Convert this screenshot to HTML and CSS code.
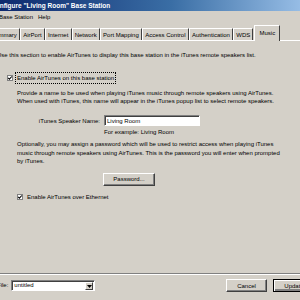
FILE: index.html
```html
<!DOCTYPE html>
<html lang="en">
<head>
    <meta charset="UTF-8">
    <title>Configure "Living Room" Base Station</title>
    <link rel="stylesheet" href="styles.css">
</head>
<body>
<div class="window">
    <div class="titlebar"><span class="title">Configure "Living Room" Base Station</span></div>
    <div class="menubar">
        <span class="menu-item">Base Station</span>
        <span class="menu-item">Help</span>
    </div>
    <div class="tabs">
        <span class="tab">Summary</span>
        <span class="tab">AirPort</span>
        <span class="tab">Internet</span>
        <span class="tab">Network</span>
        <span class="tab">Port Mapping</span>
        <span class="tab">Access Control</span>
        <span class="tab">Authentication</span>
        <span class="tab">WDS</span>
        <span class="tab active">Music</span>
    </div>
    <div class="panel">
        <p class="intro">Use this section to enable AirTunes to display this base station in the iTunes remote speakers list.</p>

        <div class="check first">
            <svg class="box" width="6" height="6" viewBox="0 0 6 6">
                <rect x="0.5" y="0.5" width="5" height="5" fill="#fff" stroke="#808080"/>
                <path d="M1.2 2.8 L2.4 4.2 L4.8 1.5" fill="none" stroke="#000" stroke-width="1.1"/>
            </svg>
            <span class="check-label focused">Enable AirTunes on this base station</span>
        </div>

        <p class="note">Provide a name to be used when playing iTunes music through remote speakers using AirTunes.<br>When used with iTunes, this name will appear in the iTunes popup list to select remote speakers.</p>

        <div class="field-row">
            <span class="field-label">iTunes Speaker Name:</span>
            <span class="textbox">Living Room</span>
        </div>
        <p class="example">For example: Living Room</p>

        <p class="note optional">Optionally, you may assign a password which will be used to restrict access when playing iTunes<br>music through remote speakers using AirTunes. This is the password you will enter when prompted<br>by iTunes.</p>

        <button class="btn password-btn">Password...</button>

        <div class="check ethernet">
            <svg class="box" width="6" height="6" viewBox="0 0 6 6">
                <rect x="0.5" y="0.5" width="5" height="5" fill="#fff" stroke="#808080"/>
                <path d="M1.2 2.8 L2.4 4.2 L4.8 1.5" fill="none" stroke="#000" stroke-width="1.1"/>
            </svg>
            <span class="check-label">Enable AirTunes over Ethernet</span>
        </div>
    </div>
    <div class="footer">
        <span class="file-label">File:</span>
        <span class="combo">
            <span class="combo-text">untitled</span>
            <span class="combo-arrow"><svg width="5" height="3" viewBox="0 0 5 3"><path d="M0 0 H5 L2.5 3 Z" fill="#000"/></svg></span>
        </span>
        <button class="btn cancel-btn">Cancel</button>
        <button class="btn default-btn">Update</button>
    </div>
</div>
</body>
</html>
```

FILE: styles.css
```css
body {
    margin: 0;
    background: #d4d0c8;
    overflow: hidden;
    font-family: "Liberation Sans", Arial, sans-serif;
    font-size: 6px;
    color: #000000;
}
.window {
    width: 334px;
    height: 300px;
    margin-left: -12px;
    display: flex;
    flex-direction: column;
}
.titlebar {
    height: 11px;
    line-height: 11px;
    padding-left: 3px;
    background: linear-gradient(to right, #0a246a, #3a6ea5 55%, #a6caf0);
    color: #ffffff;
    font-weight: bold;
    font-size: 6.5px;
    white-space: nowrap;
}
.menubar {
    height: 12px;
    line-height: 13px;
    padding-left: 11px;
    display: flex;
    gap: 5px;
}
.tabs {
    height: 15px;
    margin-top: 2px;
    display: flex;
    align-items: flex-end;
    white-space: nowrap;
}
.tab {
    height: 12px;
    line-height: 12px;
    padding: 0 2.2px;
    border-left: 1px solid #ffffff;
    border-right: 1px solid #404040;
    border-top: 1px solid #ffffff;
    box-sizing: border-box;
}
.tab.active {
    height: 16px;
    margin-bottom: -1px;
    margin-left: 1px;
    padding: 0 4px;
    line-height: 15px;
    background: #d4d0c8;
    position: relative;
}
.panel {
    flex: 1;
    border-top: 1px solid #ffffff;
    padding: 10px 0 0 9px;
    line-height: 8px;
    white-space: nowrap;
}
.panel p {
    margin: 0;
}
.check {
    display: flex;
    align-items: center;
    gap: 4px;
    height: 8px;
}
.check.first {
    margin: 15px 0 0 10px;
}
.check.ethernet {
    margin: 7px 0 0 20px;
}
.box {
    flex: none;
}
.focused {
    outline: 1px dotted #000000;
    outline-offset: 1px;
}
.note {
    padding-left: 20px;
    margin-top: 7px !important;
}
.note.optional {
    margin-top: 4px !important;
    line-height: 8.5px;
}
.field-row {
    display: flex;
    align-items: center;
    height: 11px;
    margin-top: 10px;
    margin-left: -12px;
}
.field-label {
    width: 115px;
    text-align: right;
    margin-right: 4px;
}
.textbox {
    width: 96px;
    height: 11px;
    line-height: 10px;
    padding-left: 2px;
    background: #ffffff;
    border: 1px solid;
    border-color: #808080 #ffffff #ffffff #808080;
    box-shadow: inset 1px 1px #404040;
    box-sizing: border-box;
}
.example {
    padding-left: 107px;
    margin-top: 2px !important;
}
.btn {
    font: inherit;
    color: #000000;
    height: 13px;
    padding: 0;
    background: #d4d0c8;
    border: 1px solid;
    border-color: #ffffff #404040 #404040 #ffffff;
    box-shadow: inset -1px -1px #808080;
    box-sizing: border-box;
}
.password-btn {
    display: block;
    width: 52px;
    margin: 7px 0 0 106px;
}
.footer {
    height: 27px;
    border-top: 1px solid #808080;
    box-shadow: inset 0 1px #ffffff;
    box-sizing: border-box;
    padding: 5px 7px 0 9px;
    display: flex;
    align-items: flex-start;
}
.file-label {
    line-height: 13px;
    margin-right: 3px;
}
.combo {
    margin-top: 1px;
    width: 84px;
    height: 11px;
    display: flex;
    background: #ffffff;
    border: 1px solid;
    border-color: #808080 #ffffff #ffffff #808080;
    box-shadow: inset 1px 1px #404040;
    box-sizing: border-box;
}
.combo-text {
    flex: 1;
    line-height: 9px;
    padding-left: 2px;
}
.combo-arrow {
    width: 8px;
    margin: 1px 1px 0 0;
    height: 8px;
    background: #d4d0c8;
    display: flex;
    align-items: center;
    justify-content: center;
    box-sizing: border-box;
    border: 1px solid;
    border-color: #ffffff #404040 #404040 #ffffff;
}
.cancel-btn {
    width: 41px;
    margin-left: auto;
}
.default-btn {
    width: 42px;
    margin-left: 6px;
    border-color: #000000;
    box-shadow: inset 1px 1px #ffffff, inset -2px -2px #808080;
}
```
